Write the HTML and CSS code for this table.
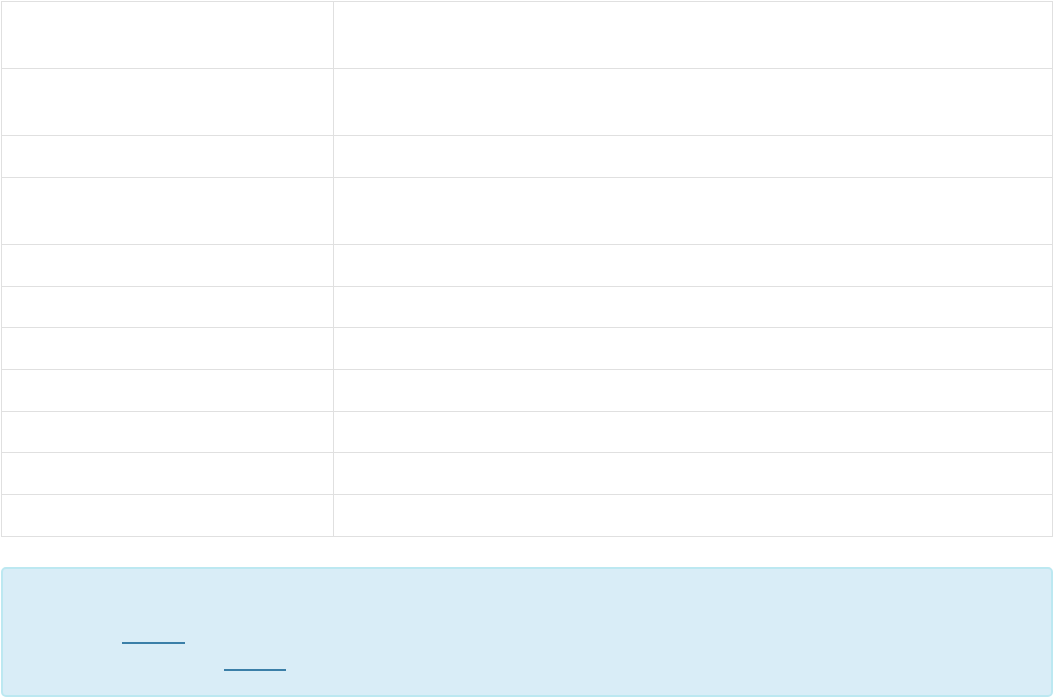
FILE: index.html
```html
<!DOCTYPE html>
<html lang="en">
<head>
<meta charset="utf-8">
<title>Table</title>
<link rel="stylesheet" href="styles.css">
</head>
<body>
<div class="page">
  <table class="grid">
    <tbody>
      <tr class="double"><td class="key"><div class="cell"></div></td><td><div class="cell"></div></td></tr>
      <tr class="double"><td class="key"><div class="cell"></div></td><td><div class="cell"></div></td></tr>
      <tr class="single"><td class="key"><div class="cell"></div></td><td><div class="cell"></div></td></tr>
      <tr class="double"><td class="key"><div class="cell"></div></td><td><div class="cell"></div></td></tr>
      <tr class="single"><td class="key"><div class="cell"></div></td><td><div class="cell"></div></td></tr>
      <tr class="single short"><td class="key"><div class="cell"></div></td><td><div class="cell"></div></td></tr>
      <tr class="single"><td class="key"><div class="cell"></div></td><td><div class="cell"></div></td></tr>
      <tr class="single"><td class="key"><div class="cell"></div></td><td><div class="cell"></div></td></tr>
      <tr class="single short"><td class="key"><div class="cell"></div></td><td><div class="cell"></div></td></tr>
      <tr class="single"><td class="key"><div class="cell"></div></td><td><div class="cell"></div></td></tr>
      <tr class="single"><td class="key"><div class="cell"></div></td><td><div class="cell"></div></td></tr>
    </tbody>
  </table>

  <div class="alert">
    <div class="line"></div>
    <div class="line"><a class="link first" href="#">link</a></div>
    <div class="line"><a class="link second" href="#">link</a></div>
  </div>
</div>
</body>
</html>
```

FILE: styles.css
```css
html, body {
  margin: 0;
  padding: 0;
  background: #ffffff;
  font-family: "Open Sans", "Liberation Sans", sans-serif;
  font-size: 15px;
}

.page {
  padding: 1px 1px 0 1px;
  width: 1052px;
}

.grid {
  width: 1052px;
  border-collapse: collapse;
  border: 1px solid #e0e0e0;
  table-layout: fixed;
}

.grid td {
  border: 1px solid #e0e0e0;
  padding: 0;
  vertical-align: top;
}

.grid td.key {
  width: 331px;
}

.cell {
  height: 41px;
}

.double .cell {
  height: 66px;
}

.short .cell {
  height: 40px;
}

.alert {
  margin-top: 30px;
  background: #d9edf7;
  border: 2px solid #bce8f1;
  border-radius: 5px;
  padding: 24px 20px 21px 20px;
  height: 81px;
}

.line {
  height: 27px;
}

.link {
  display: block;
  height: 22px;
  border-bottom: 2px solid #3a7fa8;
  color: transparent;
  text-decoration: none;
  overflow: hidden;
  font-size: 12px;
  line-height: 22px;
}

.link.first {
  width: 63px;
  margin-left: 99px;
}

.link.second {
  width: 62px;
  margin-left: 201px;
}
```
